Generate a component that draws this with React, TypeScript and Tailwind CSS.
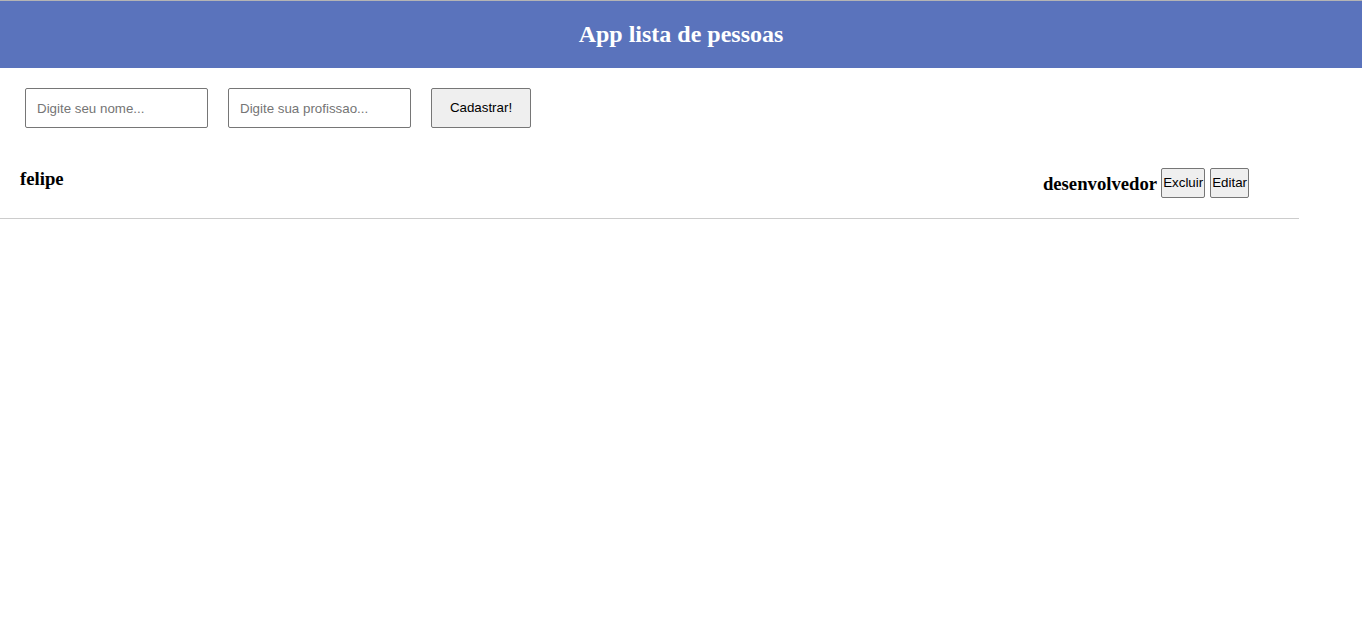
import React from 'react';

const pessoas = [{ nome: 'felipe', profissao: 'desenvolvedor' }];

export default function App() {
  return (
    <div className="min-h-[619px] bg-white font-['Liberation_Serif',serif] text-black">
      {/* Header */}
      <header className="border-t border-[#b4b4b4] bg-[#5a73bc] h-[68px] flex items-center justify-center pb-[2px]">
        <h1 className="text-[24px] font-bold text-white">App lista de pessoas</h1>
      </header>

      {/* Form */}
      <div className="flex items-center gap-5 pl-[25px] pt-5">
        <input
          type="text"
          placeholder="Digite seu nome..."
          className="w-[183px] h-10 border border-[#767676] rounded-[2px] px-[11px] text-[13.33px] font-['Liberation_Sans',sans-serif] placeholder:text-[#757575] outline-none"
        />
        <input
          type="text"
          placeholder="Digite sua profissao..."
          className="w-[183px] h-10 border border-[#767676] rounded-[2px] px-[11px] text-[13.33px] font-['Liberation_Sans',sans-serif] placeholder:text-[#757575] outline-none"
        />
        <button className="w-[100px] h-10 border border-[#767676] rounded-[2px] bg-[#efefef] text-[13.33px] font-['Liberation_Sans',sans-serif]">
          Cadastrar!
        </button>
      </div>

      {/* Lista */}
      <ul className="mt-5 w-[1299px]">
        {pessoas.map((p, i) => (
          <li key={i} className="flex justify-between border-b border-[#cccccc] pl-5 pr-[50px] h-[71px]">
            <h3 className="text-[18.72px] font-bold pt-[20px] leading-[22px]">{p.nome}</h3>
            <div className="flex items-center gap-1 pt-[20px] self-start">
              <h3 className="text-[18.72px] font-bold leading-[22px] mt-[1px]">{p.profissao}</h3>
              <button className="h-[30px] px-[1px] border border-[#767676] rounded-[2px] bg-[#efefef] text-[13.33px] font-['Liberation_Sans',sans-serif]">
                Excluir
              </button>
              <button className="ml-[1px] h-[30px] px-[1px] border border-[#767676] rounded-[2px] bg-[#efefef] text-[13.33px] font-['Liberation_Sans',sans-serif]">
                Editar
              </button>
            </div>
          </li>
        ))}
      </ul>
    </div>
  );
}
